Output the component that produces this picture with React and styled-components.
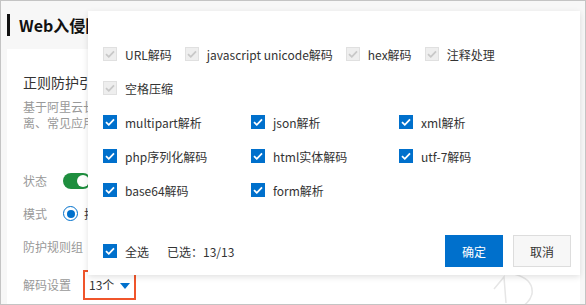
import React from 'react'
import styled, {createGlobalStyle} from 'styled-components'

const GlobalStyle = createGlobalStyle`
    html, body {
        margin: 0;
        padding: 0;
        background: #fff;
    }
    * {
        box-sizing: border-box;
    }
    body {
        font-family: "Noto Sans CJK SC", "Noto Sans", sans-serif;
        color: #333;
    }
`

const Frame = styled.div`
    position: relative;
    width: 586px;
    height: 305px;
    border: 1px solid #c4c4c4;
    background: #f7f7f7;
    overflow: hidden;
`

const Header = styled.div`
    display: flex;
    align-items: center;
    height: 48px;
    padding: 0 0 0 6px;
`

const TitleBar = styled.div`
    border-left: 3px solid #111;
    height: 22px;
    padding-left: 9px;
    display: flex;
    align-items: center;
    font-size: 16px;
    font-weight: 700;
    color: #111;
    white-space: nowrap;
`

const Card = styled.div`
    position: relative;
    margin: 0 5px 0 6px;
    height: 260px;
    background: #fff;
    padding: 22px 0 0 16px;
    overflow: hidden;
`

const CardTitle = styled.div`
    font-size: 14px;
    line-height: 22px;
    color: #333;
    white-space: nowrap;
`

const Desc = styled.div`
    margin-top: 6px;
    margin-bottom: 33px;
    font-size: 12px;
    line-height: 16px;
    color: #999;
    white-space: nowrap;
`

const FormRow = styled.div`
    display: flex;
    align-items: center;
    height: ${p => p.$h || 33}px;
    font-size: 12px;
`

const FormLabel = styled.div`
    width: 40px;
    color: #999;
    white-space: nowrap;
`

const Toggle = styled.div`
    width: 28px;
    height: 16px;
    border-radius: 8px;
    background: #1e8e3e;
    position: relative;
    &::after {
        content: '';
        position: absolute;
        right: 2px;
        top: 2px;
        width: 12px;
        height: 12px;
        border-radius: 50%;
        background: #fff;
    }
`

const Radio = styled.div`
    width: 15px;
    height: 15px;
    border-radius: 50%;
    border: 1.5px solid #0070cc;
    display: flex;
    align-items: center;
    justify-content: center;
    &::after {
        content: '';
        width: 8px;
        height: 8px;
        border-radius: 50%;
        background: #0070cc;
    }
`

const RadioText = styled.span`
    margin-left: 6px;
    color: #333;
    white-space: nowrap;
`

const DecodeValue = styled.div`
    margin-left: 20px;
    display: flex;
    align-items: center;
    gap: 6px;
    height: 30px;
    padding: 0 4px;
    border: 2px solid #f0552b;
    color: #333;
    font-size: 12px;
`

const Caret = styled.span`
    width: 0;
    height: 0;
    border-left: 5px solid transparent;
    border-right: 5px solid transparent;
    border-top: 6px solid #0070cc;
    margin-top: 2px;
`

const Watermark = styled.svg`
    position: absolute;
    right: 16px;
    bottom: 0;
`

const Popup = styled.div`
    position: absolute;
    left: 87px;
    top: 10px;
    width: 492px;
    height: 264px;
    background: #fff;
    box-shadow: 0 2px 6px rgba(0, 0, 0, 0.12);
    padding: 26px 9px 0 15px;
    display: flex;
    flex-direction: column;
`

const InlineRow = styled.div`
    display: flex;
    align-items: center;
    gap: 13px;
    height: 34px;
`

const GridRow = styled.div`
    display: grid;
    grid-template-columns: 148px 148px 148px;
    align-items: center;
    height: 34px;
`

const Item = styled.label`
    display: flex;
    align-items: center;
    gap: 8px;
    font-size: 12px;
    color: #333;
    white-space: nowrap;
`

const Box = styled.span`
    width: 14px;
    height: 14px;
    display: flex;
    align-items: center;
    justify-content: center;
    background: ${p => (p.$disabled ? '#eee' : '#0070cc')};
    border: 1px solid ${p => (p.$disabled ? '#e0e0e0' : '#0070cc')};
    flex-shrink: 0;
`

const Footer = styled.div`
    margin-top: auto;
    height: 48px;
    display: flex;
    align-items: center;
`

const Selected = styled.span`
    margin-left: 18px;
    font-size: 12px;
    color: #333;
`

const Buttons = styled.div`
    margin-left: auto;
    display: flex;
    gap: 10px;
`

const Btn = styled.button`
    height: 32px;
    width: 58px;
    font-family: inherit;
    font-size: 12px;
    border: 1px solid ${p => (p.$primary ? '#0070cc' : '#ddd')};
    background: ${p => (p.$primary ? '#0070cc' : '#f7f7f7')};
    color: ${p => (p.$primary ? '#fff' : '#333')};
    padding: 0;
`

const Check = ({disabled}) => (
    <Box $disabled={disabled}>
        <svg width="10" height="8" viewBox="0 0 10 8">
            <path d="M1 4.2 L3.8 6.8 L9 1.4" fill="none" stroke={disabled ? '#c8c8c8' : '#fff'} strokeWidth="1.8" />
        </svg>
    </Box>
)

const Option = ({label, disabled}) => (
    <Item>
        <Check disabled={disabled} />
        <span>{label}</span>
    </Item>
)

const grid = [
    ['multipart解析', 'json解析', 'xml解析'],
    ['php序列化解码', 'html实体解码', 'utf-7解码'],
    ['base64解码', 'form解析'],
]

export default function App() {
    return (
        <Frame>
            <GlobalStyle />
            <Header>
                <TitleBar>Web入侵防护</TitleBar>
            </Header>
            <Card>
                <CardTitle>正则防护引擎</CardTitle>
                <Desc>
                    基于阿里云长期积累的防护规则，防护SQL注入、XSS跨站、WebShell上传、命令注入、后门隔
                    <br />
                    离、常见应用漏洞等常见Web攻击
                </Desc>
                <FormRow>
                    <FormLabel>状态</FormLabel>
                    <Toggle />
                </FormRow>
                <FormRow>
                    <FormLabel>模式</FormLabel>
                    <Radio />
                    <RadioText>拦截模式</RadioText>
                </FormRow>
                <FormRow>
                    <FormLabel>防护规则组</FormLabel>
                </FormRow>
                <FormRow $h={43}>
                    <FormLabel>解码设置</FormLabel>
                    <DecodeValue>
                        13个 <Caret />
                    </DecodeValue>
                </FormRow>
                <Watermark width="80" height="40" viewBox="0 0 80 40">
                    <path d="M10 20 L20 8 L22 34" fill="none" stroke="#e6e6e6" strokeWidth="1.5" />
                    <path d="M30 5 Q50 10 48 25 Q45 36 32 40" fill="none" stroke="#e6e6e6" strokeWidth="1.5" />
                </Watermark>
            </Card>
            <Popup>
                <InlineRow>
                    <Option label="URL解码" disabled />
                    <Option label="javascript unicode解码" disabled />
                    <Option label="hex解码" disabled />
                    <Option label="注释处理" disabled />
                </InlineRow>
                <InlineRow>
                    <Option label="空格压缩" disabled />
                </InlineRow>
                {grid.map((row, i) => (
                    <GridRow key={i}>
                        {row.map(l => (
                            <Option key={l} label={l} />
                        ))}
                    </GridRow>
                ))}
                <Footer>
                    <Option label="全选" />
                    <Selected>已选：13/13</Selected>
                    <Buttons>
                        <Btn $primary>确定</Btn>
                        <Btn>取消</Btn>
                    </Buttons>
                </Footer>
            </Popup>
        </Frame>
    )
}
